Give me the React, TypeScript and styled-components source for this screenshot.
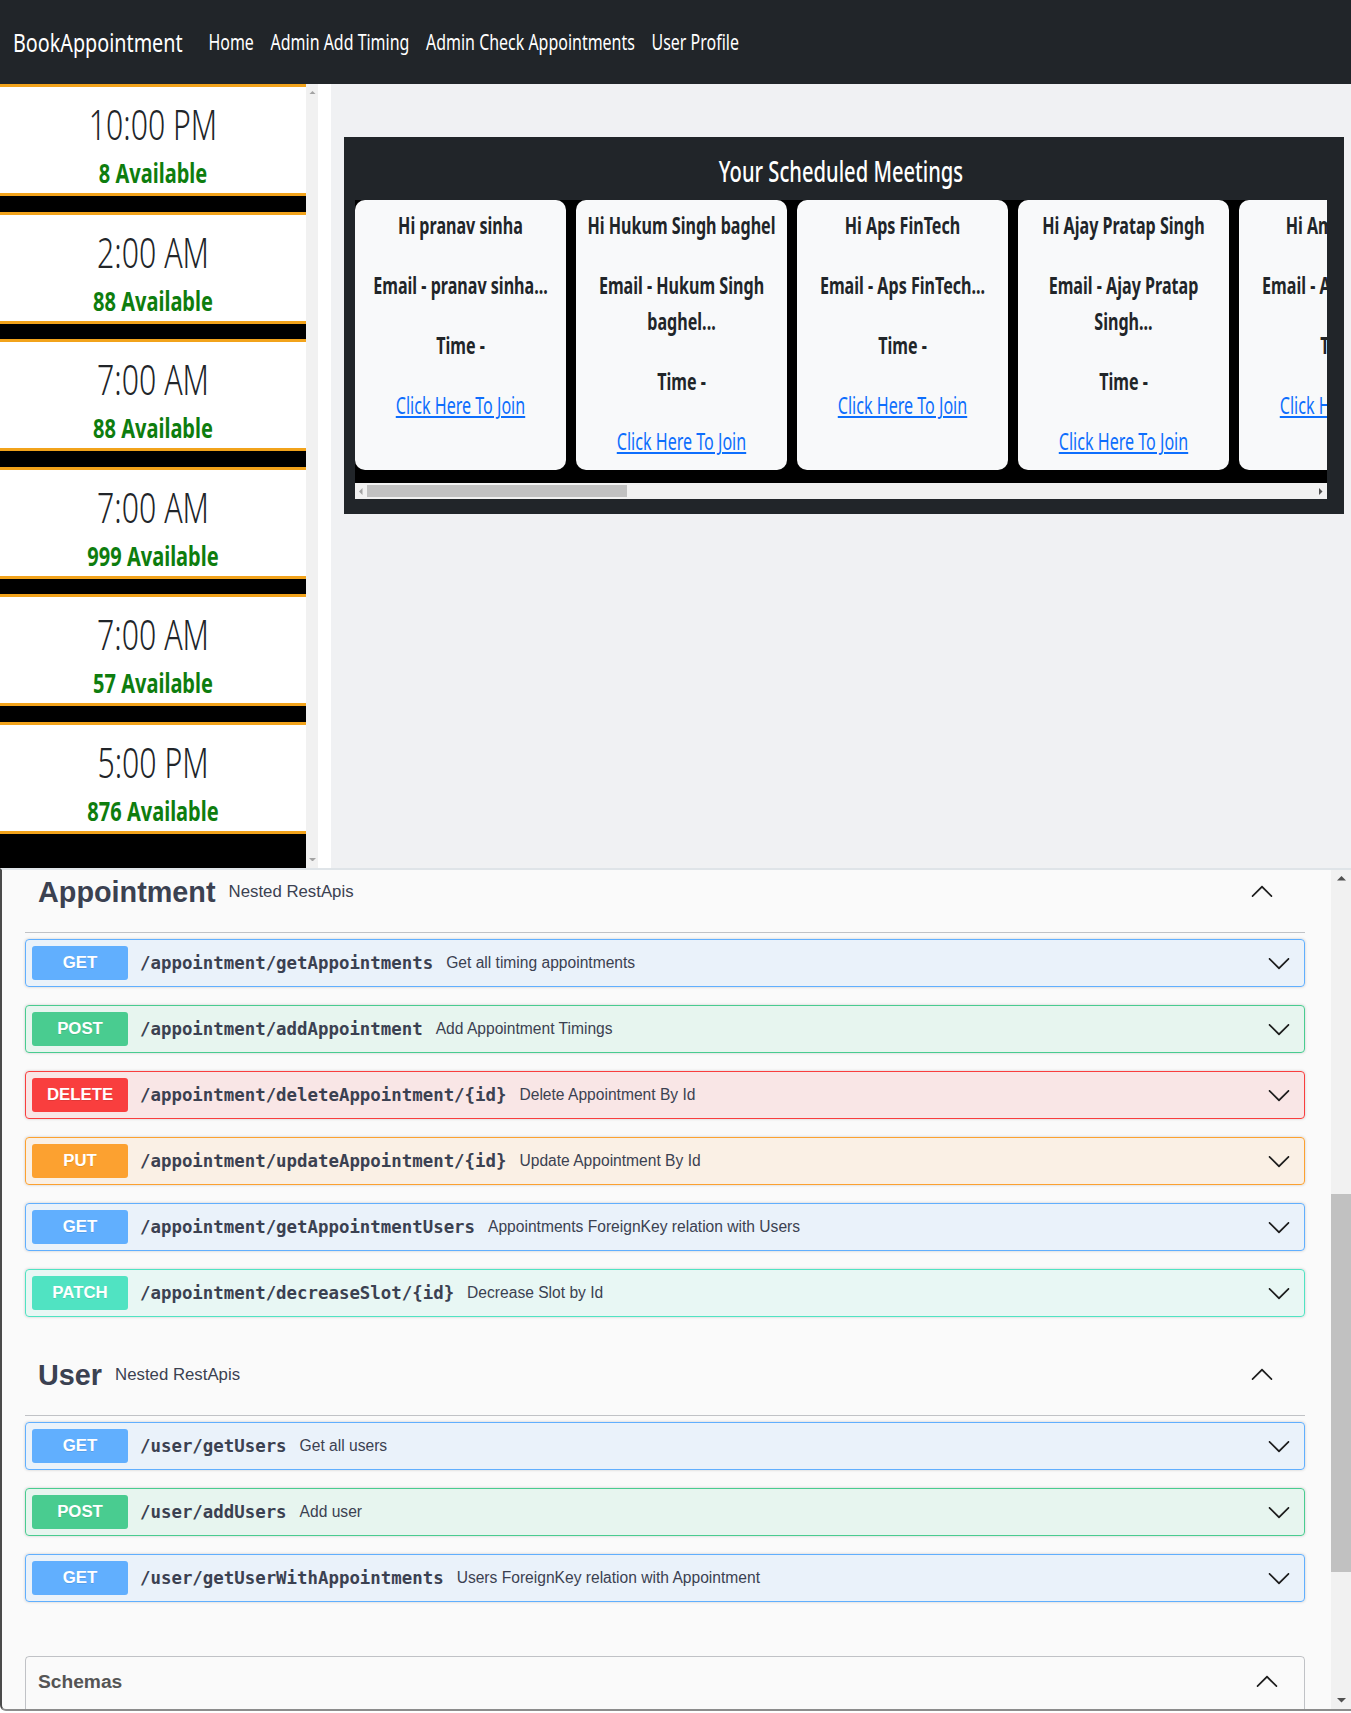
import React from "react";
import styled, { createGlobalStyle } from "styled-components";

const GlobalStyle = createGlobalStyle`
  html, body { margin: 0; padding: 0; background: #ffffff; }
  body { font-family: "Noto Sans", "Liberation Sans", sans-serif; }
  *, *::before, *::after { box-sizing: border-box; }
`;

const appFont = `font-family: "Noto Sans", "Liberation Sans", sans-serif;`;
const swaggerFont = `font-family: "Liberation Sans", Arial, sans-serif;`;

/* A block whose text is drawn narrower (the reference uses a condensed face). */
const Squeeze = styled.div<{ $k: number }>`
  width: ${(p) => 100 / p.$k}%;
  margin-right: ${(p) => 100 - 100 / p.$k}%;
  transform: scaleX(${(p) => p.$k});
  transform-origin: left top;
`;

/* ---------- Navbar ---------- */
const NavBar = styled.nav`
  ${appFont}
  height: 84px;
  background: #212529;
  display: flex;
  align-items: center;
  padding-left: 13px;
`;

const NavRow = styled(Squeeze)`
  display: flex;
  align-items: center;
`;

const Brand = styled.a`
  font-size: 26px;
  line-height: 1;
  color: #ffffff;
  margin-right: 34px;
  white-space: nowrap;
`;

const NavList = styled.div`
  display: flex;
  gap: 22px;
`;

const NavItem = styled.a`
  font-size: 21px;
  color: #ffffff;
  white-space: nowrap;
`;

/* ---------- Top area ---------- */
const TopArea = styled.div`
  display: flex;
  height: 784px;
  background: #ffffff;
`;

const SlotColumn = styled.div`
  ${appFont}
  width: 306px;
  flex-shrink: 0;
  background: #000000;
  overflow: hidden;
`;

const Slot = styled.div`
  height: 112px;
  margin-bottom: 15.6px;
  border-top: 3px solid #f2a31b;
  border-bottom: 3px solid #f2a31b;
  background: #ffffff;
  padding-top: 9px;
  text-align: center;
`;

const SlotTime = styled(Squeeze)`
  font-size: 42px;
  line-height: 56px;
  font-weight: 300;
  color: #212529;
`;

const SlotAvail = styled(Squeeze)`
  font-size: 26px;
  line-height: 36px;
  font-weight: 700;
  color: #0e7d0e;
  margin-top: 3px;
`;

const VTrack = styled.div<{ $w: number }>`
  width: ${(p) => p.$w}px;
  flex-shrink: 0;
  background: #f1f1f1;
  display: flex;
  flex-direction: column;
  align-items: center;
`;

const ArrowCell = styled.div<{ $h: number }>`
  height: ${(p) => p.$h}px;
  width: 100%;
  display: flex;
  align-items: center;
  justify-content: center;
  flex-shrink: 0;
`;

const TrackFill = styled.div`
  flex: 1;
  width: 100%;
  display: flex;
  flex-direction: column;
`;

const Thumb = styled.div`
  width: 100%;
  background: #c1c1c1;
`;

const MainArea = styled.div`
  flex: 1;
  min-width: 0;
  margin-left: 13px;
  background: #f0f1f3;
  padding: 53px 7px 0 13px;
`;

const MeetingPanel = styled.div`
  ${appFont}
  background: #212529;
  padding: 11px 17px 15px 11px;
`;

const PanelTitle = styled(Squeeze)`
  margin-bottom: 6px;
  text-align: center;
  color: #ffffff;
  font-size: 28px;
  line-height: 46px;
  font-weight: 500;
`;

const CardStrip = styled.div`
  display: flex;
  gap: 10px;
  background: #000000;
  overflow: hidden;
  padding-bottom: 13px;
  align-items: stretch;
`;

const MeetingCard = styled.div`
  flex: 0 0 211px;
  width: 211px;
  min-width: 0;
  overflow: hidden;
  background: #f8f9fa;
  border-radius: 10px;
  padding: 7px 8px 11px;
  text-align: center;
`;

const CardLine = styled.p<{ $nowrap?: boolean }>`
  margin: 0 0 24px;
  font-size: 24px;
  line-height: 36px;
  font-weight: 700;
  color: #212529;
  white-space: ${(p) => (p.$nowrap ? "nowrap" : "normal")};
  &:last-child { margin-bottom: 0; }
`;

const JoinLink = styled.a`
  color: #0d6efd;
  text-decoration: underline;
  font-weight: 400;
  cursor: pointer;
`;

const HTrack = styled.div`
  height: 16px;
  background: #f1f1f1;
  display: flex;
  align-items: center;
`;

const HArrow = styled.div`
  width: 12px;
  height: 100%;
  display: flex;
  align-items: center;
  justify-content: center;
  flex-shrink: 0;
`;

const HThumb = styled.div`
  height: 12px;
  background: #c1c1c1;
`;

const HFill = styled.div`
  flex: 1;
  display: flex;
  align-items: center;
`;

/* ---------- Swagger ---------- */
const SwaggerFrame = styled.section`
  ${swaggerFont}
  display: flex;
  height: 843px;
  margin-bottom: 2px;
  background: #fafafa;
  border-top: 2px solid #dfe4e8;
  border-left: 2px solid #4a4a4a;
  border-bottom: 2px solid #8c8c8c;
  border-bottom-left-radius: 6px;
  overflow: hidden;
`;

const SwaggerContent = styled.div`
  flex: 1;
  overflow: hidden;
  padding: 0 26px 0 23px;
`;

const SwaggerInner = styled.div<{ $offset: number }>`
  margin-top: ${(p) => -p.$offset}px;
`;

const TagHeading = styled.div`
  display: flex;
  align-items: center;
  height: 81px;
  border-bottom: 1px solid rgba(59, 65, 81, 0.3);
  padding: 0 31px 0 13px;
  margin-bottom: 6px;
  color: #3b4151;
`;

const TagName = styled.span`
  font-size: 28.8px;
  font-weight: 700;
`;

const TagDesc = styled.span`
  flex: 1;
  font-size: 16.8px;
  margin-left: 13px;
`;

const methodColors: Record<string, string> = {
  GET: "97, 175, 254",
  POST: "73, 204, 144",
  DELETE: "249, 62, 62",
  PUT: "252, 161, 48",
  PATCH: "80, 227, 194",
};

const OpRow = styled.div<{ $rgb: string }>`
  display: flex;
  align-items: center;
  padding: 6px 13px 6px 6px;
  margin-bottom: 18px;
  border: 1px solid rgb(${(p) => p.$rgb});
  background: rgba(${(p) => p.$rgb}, 0.1);
  border-radius: 4px;
  box-shadow: 0 0 3px rgba(0, 0, 0, 0.19);
  color: #3b4151;
`;

const MethodBadge = styled.span<{ $rgb: string }>`
  width: 96px;
  height: 34px;
  flex-shrink: 0;
  display: flex;
  align-items: center;
  justify-content: center;
  background: rgb(${(p) => p.$rgb});
  color: #ffffff;
  border-radius: 3px;
  font-size: 16.8px;
  font-weight: 700;
  text-shadow: 0 1px 0 rgba(0, 0, 0, 0.1);
`;

const OpPath = styled.span`
  margin-left: 12px;
  font-family: "DejaVu Sans Mono", "Liberation Mono", monospace;
  font-weight: 700;
  font-size: 17.4px;
  white-space: nowrap;
`;

const OpDesc = styled.span`
  flex: 1;
  margin-left: 13px;
  font-size: 15.6px;
  white-space: nowrap;
`;

const Models = styled.div`
  margin-top: 54px;
  border: 1px solid rgba(59, 65, 81, 0.3);
  border-radius: 4px;
  height: 120px;
`;

const ModelsHeading = styled.div`
  display: flex;
  align-items: center;
  padding: 13px 25px 13px 12px;
  font-size: 19.2px;
  line-height: 24px;
  font-weight: 700;
  color: #555555;
`;

const ModelsTitle = styled.span`
  flex: 1;
`;

/* ---------- Drawings ---------- */
const Chevron = ({ up }: { up?: boolean }) => (
  <svg width="24" height="24" viewBox="0 0 20 20" style={{ flexShrink: 0 }}>
    <g transform={up ? "rotate(180 10 10)" : undefined}>
      <path
        fill="#1d1d1d"
        d="M17.418 6.109c.272-.268.709-.268.979 0s.271.701 0 .969l-7.908 7.83c-.27.268-.707.268-.979 0l-7.908-7.83c-.27-.268-.27-.701 0-.969.271-.268.709-.268.979 0L10 13.25l7.418-7.141z"
      />
    </g>
  </svg>
);

const Tri = ({ dir, size, color }: { dir: "up" | "down" | "left" | "right"; size: number; color: string }) => {
  const s = size;
  const pts =
    dir === "up"
      ? `0,${s / 2} ${s / 2},0 ${s},${s / 2}`
      : dir === "down"
      ? `0,0 ${s},0 ${s / 2},${s / 2}`
      : dir === "left"
      ? `${s / 2},0 ${s / 2},${s} 0,${s / 2}`
      : `0,0 0,${s} ${s / 2},${s / 2}`;
  const w = dir === "up" || dir === "down" ? s : s / 2;
  const h = dir === "up" || dir === "down" ? s / 2 : s;
  return (
    <svg width={w} height={h} viewBox={`0 0 ${w} ${h}`}>
      <polygon points={pts} fill={color} />
    </svg>
  );
};

/* ---------- Data ---------- */
const slots = [
  { time: "10:00 PM", avail: 8 },
  { time: "2:00 AM", avail: 88 },
  { time: "7:00 AM", avail: 88 },
  { time: "7:00 AM", avail: 999 },
  { time: "7:00 AM", avail: 57 },
  { time: "5:00 PM", avail: 876 },
];

const meetings = [
  { name: "pranav sinha" },
  { name: "Hukum Singh baghel" },
  { name: "Aps FinTech" },
  { name: "Ajay Pratap Singh" },
  { name: "Amit Kumar" },
];

type Op = { method: string; path: string; desc: string };

const appointmentOps: Op[] = [
  { method: "GET", path: "/appointment/getAppointments", desc: "Get all timing appointments" },
  { method: "POST", path: "/appointment/addAppointment", desc: "Add Appointment Timings" },
  { method: "DELETE", path: "/appointment/deleteAppointment/{id}", desc: "Delete Appointment By Id" },
  { method: "PUT", path: "/appointment/updateAppointment/{id}", desc: "Update Appointment By Id" },
  { method: "GET", path: "/appointment/getAppointmentUsers", desc: "Appointments ForeignKey relation with Users" },
  { method: "PATCH", path: "/appointment/decreaseSlot/{id}", desc: "Decrease Slot by Id" },
];

const userOps: Op[] = [
  { method: "GET", path: "/user/getUsers", desc: "Get all users" },
  { method: "POST", path: "/user/addUsers", desc: "Add user" },
  { method: "GET", path: "/user/getUserWithAppointments", desc: "Users ForeignKey relation with Appointment" },
];

const OpList = ({ ops }: { ops: Op[] }) => (
  <>
    {ops.map((op, i) => {
      const rgb = methodColors[op.method];
      return (
        <OpRow key={i} $rgb={rgb}>
          <MethodBadge $rgb={rgb}>{op.method}</MethodBadge>
          <OpPath>{op.path}</OpPath>
          <OpDesc>{op.desc}</OpDesc>
          <Chevron />
        </OpRow>
      );
    })}
  </>
);

export default function App() {
  return (
    <>
      <GlobalStyle />
      <NavBar>
        <NavRow $k={0.76}>
          <Brand>BookAppointment</Brand>
          <NavList>
            <NavItem>Home</NavItem>
            <NavItem>Admin Add Timing</NavItem>
            <NavItem>Admin Check Appointments</NavItem>
            <NavItem>User Profile</NavItem>
          </NavList>
        </NavRow>
      </NavBar>

      <TopArea>
        <SlotColumn>
          {slots.map((s, i) => (
            <Slot key={i}>
              <SlotTime $k={0.72}>{s.time}</SlotTime>
              <SlotAvail $k={0.77}>{s.avail} Available</SlotAvail>
            </Slot>
          ))}
        </SlotColumn>
        <VTrack $w={12}>
          <ArrowCell $h={17}>
            <Tri dir="up" size={7} color="#a3a3a3" />
          </ArrowCell>
          <TrackFill />
          <ArrowCell $h={17}>
            <Tri dir="down" size={7} color="#a3a3a3" />
          </ArrowCell>
        </VTrack>

        <MainArea>
          <MeetingPanel>
            <PanelTitle $k={0.72}>Your Scheduled Meetings</PanelTitle>
            <CardStrip>
              {meetings.map((m, i) => (
                <MeetingCard key={i}>
                  <Squeeze $k={0.67}>
                    <CardLine $nowrap>Hi {m.name}</CardLine>
                    <CardLine>Email - {m.name}...</CardLine>
                    <CardLine>Time -</CardLine>
                    <CardLine>
                      <JoinLink>Click Here To Join</JoinLink>
                    </CardLine>
                  </Squeeze>
                </MeetingCard>
              ))}
            </CardStrip>
            <HTrack>
              <HArrow>
                <Tri dir="left" size={7} color="#a3a3a3" />
              </HArrow>
              <HFill>
                <HThumb style={{ width: 260 }} />
              </HFill>
              <HArrow>
                <Tri dir="right" size={7} color="#505050" />
              </HArrow>
            </HTrack>
          </MeetingPanel>
        </MainArea>
      </TopArea>

      <SwaggerFrame>
        <SwaggerContent>
          <SwaggerInner $offset={18}>
            <TagHeading>
              <TagName>Appointment</TagName>
              <TagDesc>Nested RestApis</TagDesc>
              <Chevron up />
            </TagHeading>
            <OpList ops={appointmentOps} />

            <TagHeading>
              <TagName>User</TagName>
              <TagDesc>Nested RestApis</TagDesc>
              <Chevron up />
            </TagHeading>
            <OpList ops={userOps} />

            <Models>
              <ModelsHeading>
                <ModelsTitle>Schemas</ModelsTitle>
                <Chevron up />
              </ModelsHeading>
            </Models>
          </SwaggerInner>
        </SwaggerContent>
        <VTrack $w={20}>
          <ArrowCell $h={17}>
            <Tri dir="up" size={9} color="#505050" />
          </ArrowCell>
          <TrackFill>
            <Thumb style={{ marginTop: 307, height: 378 }} />
          </TrackFill>
          <ArrowCell $h={17}>
            <Tri dir="down" size={9} color="#505050" />
          </ArrowCell>
        </VTrack>
      </SwaggerFrame>
    </>
  );
}
